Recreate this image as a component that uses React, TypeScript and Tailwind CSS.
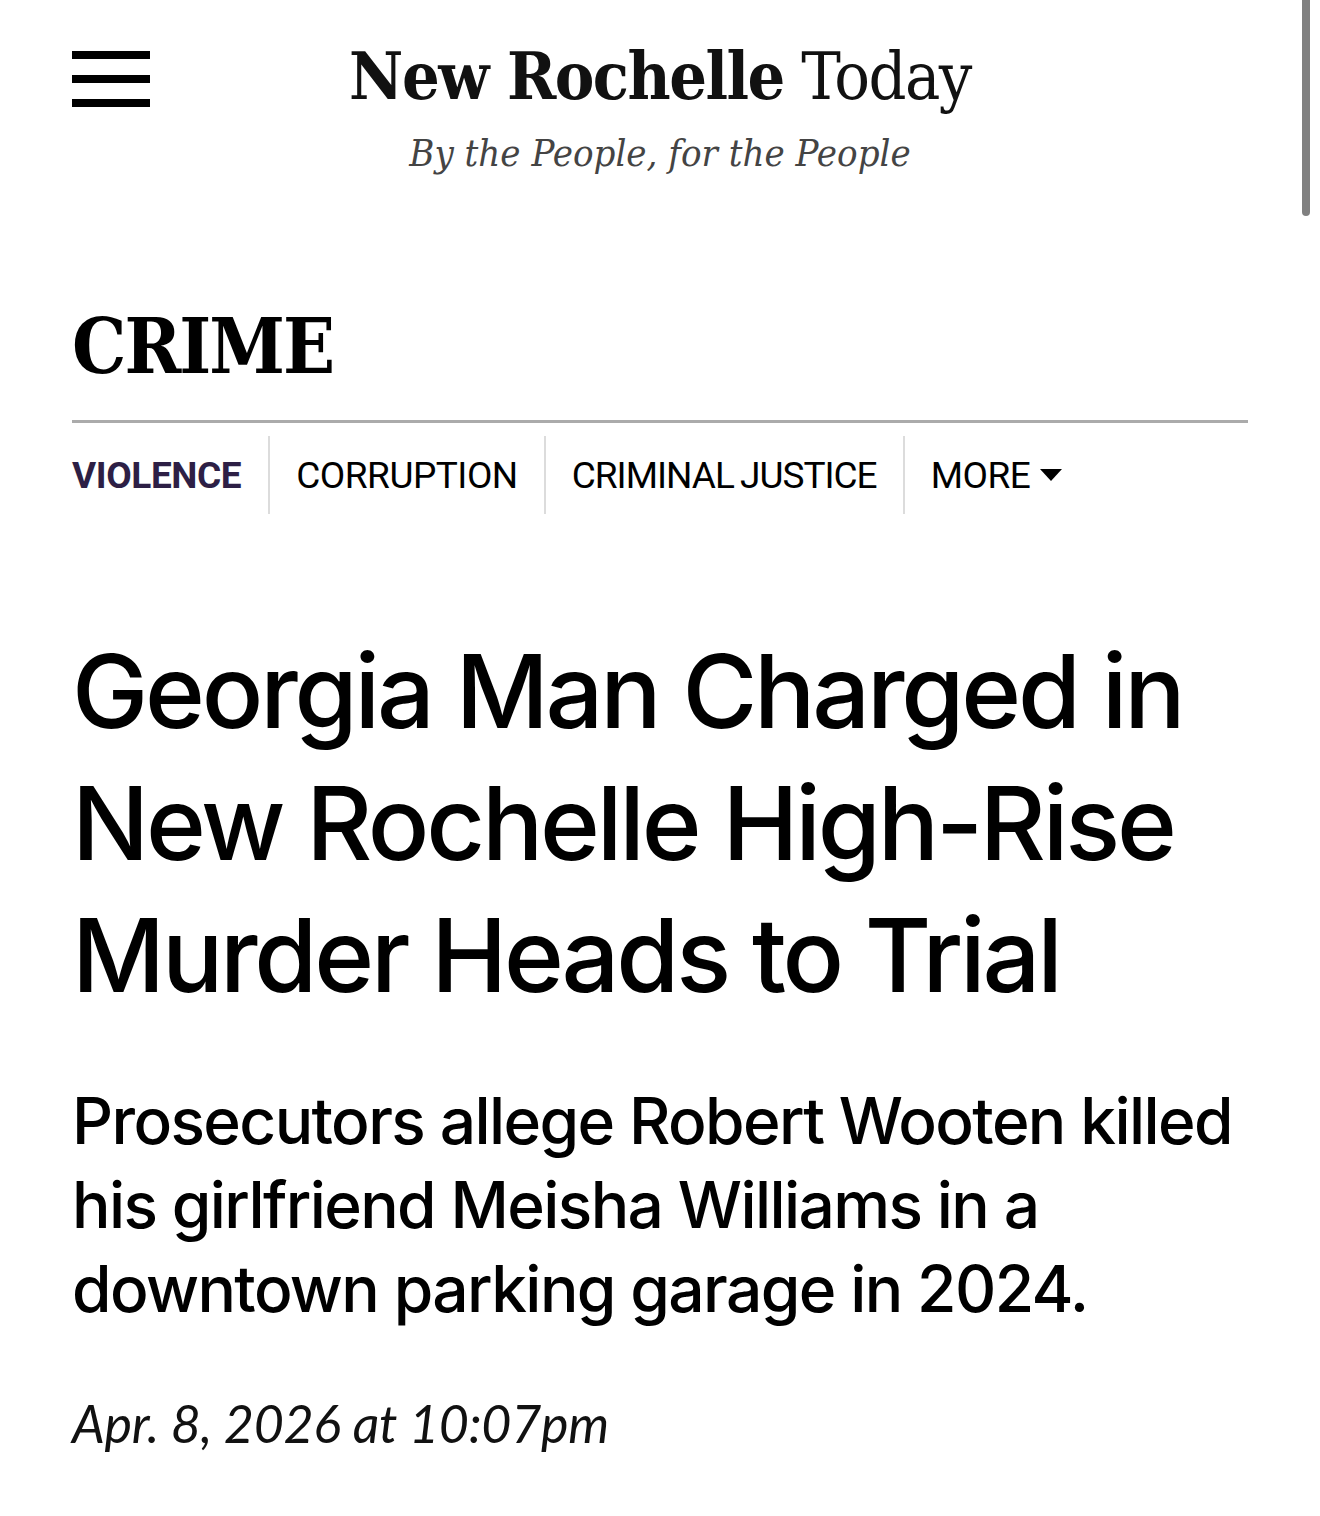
import React from 'react';

export default function App() {
  return (
    <div className="relative min-h-[1516px] w-full bg-white text-black">
      {/* overlay scrollbar thumb */}
      <div className="absolute right-[10px] top-0 h-[216px] w-[8px] rounded-b-full bg-[#808080]" />

      <header className="grid grid-cols-[1fr_auto_1fr] items-start px-[72px] pt-[38px]">
        <button className="mt-[13px] flex w-[78px] flex-col gap-[16px]" aria-label="Menu">
          <span className="h-[8px] w-full bg-black" />
          <span className="h-[8px] w-full bg-black" />
          <span className="h-[8px] w-full bg-black" />
        </button>
        <div className="flex flex-col items-center">
          <div className="font-['DejaVu_Serif',serif] text-[66px] leading-[76px] tracking-[-1.5px] text-[#111] font-stretch-condensed">
            <span className="font-bold">New Rochelle</span> Today
          </div>
          <div className="mt-[16px] font-['DejaVu_Serif',serif] text-[38px] italic leading-[44px] text-[#444] font-stretch-condensed">
            By the People, for the People
          </div>
        </div>
        <div />
      </header>

      <main className="px-[72px]">
        <h2 className="mt-[132px] font-['DejaVu_Serif',serif] text-[76px] font-bold leading-[80px] tracking-[-2px] font-stretch-condensed">
          CRIME
        </h2>
        <div className="mt-[33px] h-[3px] w-full bg-[#ababab]" />

        <nav className="mt-[13px] flex h-[78px] items-center font-['Roboto',sans-serif] text-[37px] leading-none">
          <span className="pr-[27px] font-bold tracking-[-0.4px] text-[#2d1f45]">VIOLENCE</span>
          <span className="flex h-full items-center border-l-2 border-[#dcdcdc] px-[26px] tracking-[-0.5px]">
            CORRUPTION
          </span>
          <span className="flex h-full items-center border-l-2 border-[#dcdcdc] px-[26px] tracking-[-1px] [word-spacing:-2px]">
            CRIMINAL JUSTICE
          </span>
          <span className="flex h-full items-center gap-[10px] border-l-2 border-[#dcdcdc] px-[26px] tracking-[-0.5px]">
            MORE
            <svg width="22" height="12" viewBox="0 0 22 12">
              <path d="M0 0h22L11 12z" fill="#000" />
            </svg>
          </span>
        </nav>

        <h1 className="mt-[111px] font-['Inter',sans-serif] text-[102px] font-medium leading-[132px] tracking-[-3.2px]">
          Georgia Man Charged in New Rochelle High-Rise Murder Heads to Trial
        </h1>

        <p className="mt-[58px] font-['Inter',sans-serif] text-[64px] font-medium leading-[84px] tracking-[-1.6px]">
          Prosecutors allege Robert Wooten killed his girlfriend Meisha Williams in a downtown parking garage in 2024.
        </p>

        <p className="mt-[62px] font-['Lato',sans-serif] text-[52px] italic leading-[60px] tracking-[-0.3px] text-[#111]">
          Apr. 8, 2026 at 10:07pm
        </p>
      </main>
    </div>
  );
}
